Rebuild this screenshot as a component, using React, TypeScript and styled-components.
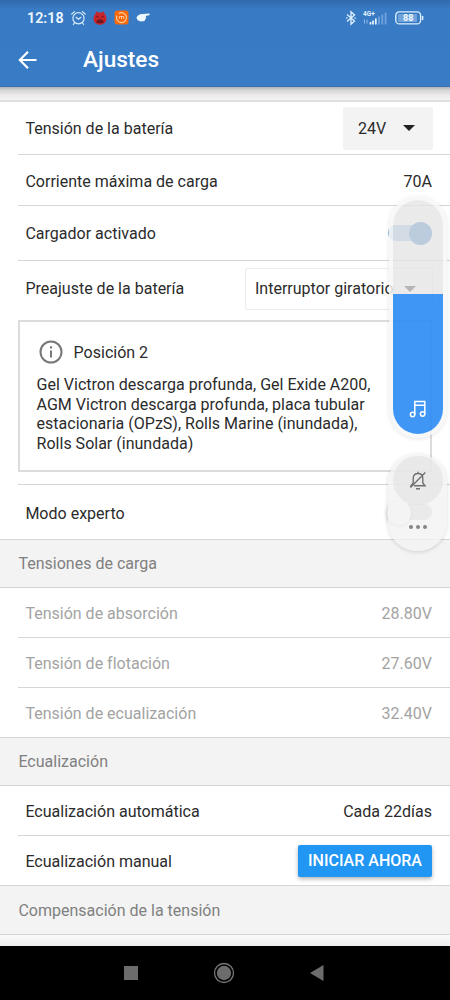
import React from 'react';
import styled, { createGlobalStyle } from 'styled-components';

const GlobalStyle = createGlobalStyle`
  * { box-sizing: border-box; }
  body { margin: 0; background: #fff; }
`;

const Screen = styled.div`
  position: relative;
  width: 450px;
  height: 1000px;
  overflow: hidden;
  display: flex;
  flex-direction: column;
  background: #fff;
  color: #2b2b2b;
  font-family: Roboto, sans-serif;
  font-size: 16.03px;
  font-variant-ligatures: none;
`;

const Header = styled.header`
  flex: none;
  height: 87px;
  background: linear-gradient(#3169ac 0, #387ac4 9px, #397cc6 100%);
  border-bottom: 1px solid #3a70ae;
  color: #fff;
`;

const StatusBar = styled.div`
  height: 35px;
  display: flex;
  align-items: center;
  justify-content: space-between;
  padding: 0 26px 0 27px;
`;

const StatusGroup = styled.div<{ $gap: number }>`
  display: flex;
  align-items: center;
  gap: ${(p) => p.$gap}px;
  svg { display: block; }
`;

const Clock = styled.span`
  width: 37px;
  padding-top: 1px;
  font-size: 14.3px;
  font-weight: 600;
  color: #eef7ff;
  white-space: nowrap;
`;

const TitleBar = styled.div`
  height: 49px;
  display: flex;
  align-items: center;
  gap: 45px;
  padding-left: 18px;
  svg { display: block; }
`;

const Title = styled.h1`
  margin: 0;
  font-size: 22.6px;
  font-weight: 500;
`;

const HeaderShadow = styled.div`
  flex: none;
  height: 15px;
  border-bottom: 2px solid #dfdfdf;
  background: linear-gradient(#aeb2b9 0, #d3d3d4 3px, #eceaea 8px, #f4f3f2 100%);
`;

const Row = styled.div<{ $h: number; $full?: boolean; $muted?: boolean }>`
  flex: none;
  height: ${(p) => p.$h}px;
  margin-left: ${(p) => (p.$full ? 0 : 18)}px;
  padding: 0 18px 0 ${(p) => (p.$full ? 25.4 : 7.4)}px;
  border-bottom: 1px solid #d6d6d6;
  display: flex;
  align-items: center;
  justify-content: space-between;
  white-space: nowrap;
  color: ${(p) => (p.$muted ? '#a3a3a3' : '#2b2b2b')};
`;

const Label = styled.span<{ $drop?: number }>`
  padding-top: ${(p) => p.$drop ?? 2}px;
`;

const SectionTitle = styled.h2<{ $h: number }>`
  flex: none;
  margin: 0;
  height: ${(p) => p.$h}px;
  padding-left: 18.4px;
  display: flex;
  align-items: center;
  background: #f3f3f3;
  border-bottom: 1px solid #d3d3d3;
  color: #808080;
  font-size: 16.03px;
  font-weight: 400;
`;

const VoltageSelect = styled.div`
  width: 90px;
  height: 43px;
  margin-right: -1px;
  padding: 0 18px 0 15px;
  display: flex;
  align-items: center;
  justify-content: space-between;
  background: #f3f3f3;
  border-radius: 2px;
`;

const PresetSelect = styled.div`
  width: 188px;
  height: 42px;
  padding: 0 16px 0 9.5px;
  display: flex;
  align-items: center;
  justify-content: space-between;
  border: 1px solid #ececec;
  border-radius: 2px;
`;

const Caret = styled.span`
  flex: none;
  border: 6px solid transparent;
  border-top-color: #222;
  border-bottom: 0;
`;

const PresetBlock = styled.section`
  flex: none;
  height: 224px;
  margin-left: 18px;
  border-bottom: 1px solid #d6d6d6;
`;

const PresetRow = styled.div`
  height: 55px;
  display: flex;
  align-items: center;
  justify-content: space-between;
  padding: 0 17.5px 0 7.4px;
  white-space: nowrap;
`;

const InfoCard = styled.div`
  height: 152px;
  margin: 4px 18px 0 0;
  padding: 17px 16.600px;
  border: 2px solid #dcdcdc;
`;

const InfoHead = styled.div`
  display: flex;
  align-items: center;
  gap: 11px;
  height: 26px;
  padding-left: 2px;
  svg { display: block; }
`;

const InfoText = styled.p`
  margin: 10px 0 0;
  line-height: 19.5px;
  white-space: nowrap;
`;

const Switch = styled.span<{ $on?: boolean }>`
  position: relative;
  width: 43px;
  height: 24px;
  flex: none;
  &::before {
    content: '';
    position: absolute;
    left: ${(p) => (p.$on ? -1 : 1)}px;
    right: 0;
    top: 4px;
    height: 16px;
    border-radius: 8px;
    background: ${(p) => (p.$on ? '#9cbfe3' : '#c6c6c6')};
  }
  &::after {
    content: '';
    position: absolute;
    top: ${(p) => (p.$on ? 0.5 : 1)}px;
    left: ${(p) => (p.$on ? 19.5 : -2)}px;
    width: ${(p) => (p.$on ? 23 : 24)}px;
    height: ${(p) => (p.$on ? 23 : 24)}px;
    border-radius: 50%;
    background: ${(p) => (p.$on ? '#3a7fc8' : '#fafafa')};
    box-shadow: ${(p) => (p.$on ? 'none' : '0 1px 4px rgba(0,0,0,.25)')};
  }
`;

const StartButton = styled.button`
  width: 134px;
  height: 32px;
  padding: 0;
  border: 0;
  border-radius: 2px;
  background: #2196f3;
  box-shadow: 0 2px 4px rgba(0, 0, 0, 0.3);
  color: #fff;
  font: 500 16.03px Roboto, sans-serif;
`;

const PageEnd = styled.div`
  flex: 1;
  background: linear-gradient(#fbfbfb, #ececec);
`;

const NavBar = styled.nav`
  flex: none;
  height: 54px;
  background: #000;
  display: flex;
  justify-content: center;
  align-items: center;
  gap: 75px;
  padding-right: 2px;
  svg { display: block; }
`;

const VolumePanel = styled.div`
  position: absolute;
  left: 389px;
  top: 196px;
  width: 58px;
  height: 242px;
  border: 4px solid rgba(247, 247, 247, 0.86);
  border-radius: 29px;
  box-shadow: 0 1px 4px rgba(0, 0, 0, 0.1);
`;

const VolumeTrack = styled.div`
  width: 50px;
  height: 234px;
  border-radius: 25px;
  overflow: hidden;
  display: flex;
  flex-direction: column;
  justify-content: flex-end;
  background: linear-gradient(rgba(228, 228, 228, 0.76) 94px, transparent 94px);
`;

const VolumeLevel = styled.div`
  height: 140px;
  display: flex;
  align-items: flex-end;
  justify-content: center;
  padding-bottom: 16px;
  background: rgba(43, 139, 244, 0.9);
  svg { display: block; }
`;

const MutePanel = styled.div`
  position: absolute;
  left: 388px;
  top: 454px;
  width: 59px;
  height: 97px;
  padding: 2px 0 0 5px;
  border-radius: 29px;
  background: rgba(243, 243, 243, 0.8);
  box-shadow: 0 1px 4px rgba(0, 0, 0, 0.15);
`;

const MuteButton = styled.div`
  width: 50px;
  height: 49px;
  border-radius: 25px;
  background: rgba(222, 222, 222, 0.5);
  display: flex;
  align-items: center;
  justify-content: center;
`;

const More = styled.div`
  display: flex;
  justify-content: center;
  gap: 3px;
  width: 50px;
  margin-top: 19.500px;
`;

const Dot = styled.span`
  width: 4px;
  height: 4px;
  border-radius: 50%;
  background: #858585;
`;

const AlarmIcon = () => (
  <svg width="15" height="16" viewBox="0 0 15 16" fill="none" stroke="#d8ecfc" strokeWidth="1.2" strokeLinecap="round">
    <circle cx="7.5" cy="8.3" r="5.6" />
    <path d="M.8 4 3.6 1.6M14.2 4 11.4 1.6M5 7.3l2.5 2 2.5-2M3.5 13l-1.2 1.5M11.5 13l1.2 1.5" />
  </svg>
);

const BugIcon = () => (
  <svg width="14" height="16" viewBox="0 0 14 16">
    <path d="M3 1.2 5 2.600h4l2-1.400.4 2.800c1.500 1 2.100 2.600 2.100 4.800 0 3.500-2.600 6-6.500 6S.5 12.300.5 8.800C.5 6.500 1.200 5 2.600 4Z" fill="#c9252b" />
    <path d="M3.300 6 5.500 7.500M10.700 6 8.500 7.500" fill="none" stroke="#7d1a25" strokeWidth="1.500" />
    <path d="M3.200 12.500C3.500 10.500 5 9.300 7 9.300s3.500 1.200 3.800 3.200C9.500 13.400 4.500 13.400 3.200 12.500Z" fill="#6b1822" />
  </svg>
);

const CashIcon = () => (
  <svg width="15" height="15" viewBox="0 0 15 15">
    <rect x=".5" y=".5" width="14" height="14" rx="3" fill="#f8690c" />
    <path d="M4.800 3.400A5 5 0 1 1 2.800 5.800" fill="none" stroke="#ffd0a6" strokeWidth="1.100" />
    <path d="M5.300 9V6.500h4.400V9M7.500 6.500V9" fill="none" stroke="#ffc697" strokeWidth="1" />
  </svg>
);

const HandIcon = () => (
  <svg width="15" height="12" viewBox="0 0 15 12" fill="#eef8ff">
    <path d="M.5 5.500C1.500 3 4 1.800 6.500 2L13 1.500c1 0 1 1.700 0 1.800L9.500 4c1 .8.800 1.600.2 2 .3.900-.1 1.500-.7 1.800 0 1-1 1.500-2 1.500C4 9.700.8 8.800.5 5.500Z" />
  </svg>
);

const BluetoothIcon = () => (
  <svg width="10" height="16" viewBox="0 0 10 16" fill="none" stroke="#e0f1ff" strokeWidth="1.300">
    <path d="M1 4.500 8.500 11 5 14.300V1.700L8.500 5 1 11.500" />
    <path d="M.3 8h1.200M8.500 8h1.200" />
  </svg>
);

const SignalText = styled.text`
  font: 700 6.5px Roboto, sans-serif;
`;

const SignalIcon = () => (
  <svg width="25" height="15" viewBox="0 0 25 15">
    <SignalText x="0" y="5.800" fill="#e0f1ff">4G+</SignalText>
    <path d="M1.500 9.500v4M4 9.500v4" stroke="#8dbae6" strokeWidth="1" />
    <path d="M7.500 12v2.500M10 10.500v4M12.800 8.500v6" stroke="#e8f6ff" strokeWidth="1.700" />
    <path d="M16 6.500v8M19.300 4.500v10M22.600 2.500v12" stroke="#6fa4dc" strokeWidth="1.800" />
  </svg>
);

const BatteryText = styled.text`
  font: 700 9px Roboto, sans-serif;
`;

const BatteryIcon = () => (
  <svg width="29" height="14" viewBox="0 0 29 14">
    <rect x=".8" y=".9" width="24.800" height="12" rx="3.500" fill="none" stroke="#d9efff" strokeWidth="1.400" />
    <rect x="3" y="3" width="19" height="8" rx="1" fill="#6fa3da" />
    <path d="M27.600 5v4" stroke="#d9efff" strokeWidth="1.500" />
    <BatteryText x="13.200" y="10.200" textAnchor="middle" fill="#f2faff">88</BatteryText>
  </svg>
);

const BackIcon = () => (
  <svg width="20" height="20" viewBox="0 0 20 20" fill="none" stroke="#fff" strokeWidth="2.100">
    <path d="M18.500 10H2.500M10 1.800 1.800 10l8.200 8.200" />
  </svg>
);

const InfoIcon = () => (
  <svg width="24" height="24" viewBox="0 0 24 24" fill="none" stroke="#777" strokeWidth="2">
    <circle cx="12" cy="12" r="10.500" />
    <path d="M12 10.500v7M12 6.200v2.300" />
  </svg>
);

const MusicIcon = () => (
  <svg width="18" height="18" viewBox="0 0 18 18" fill="none" stroke="#fff" strokeWidth="1.500">
    <path d="M5.800 14.500V1.500h10v12.500M5.800 5.300h10" />
    <circle cx="3.600" cy="14.500" r="2.200" />
    <circle cx="13.600" cy="14" r="2.200" />
  </svg>
);

const BellOffIcon = () => (
  <svg width="18" height="20" viewBox="0 0 18 20" fill="none" stroke="#707070" strokeWidth="1.400">
    <path d="M4.200 12V7.500C4.200 4.500 6 2.500 9 2.500s4.800 2 4.800 5V12l2.200 2.700H5M4.200 12 2 14.700h1M9 2.500V.8M7 17.800h4M16.300 1.500 1.500 16.500" />
  </svg>
);

const App = () => (
  <>
    <GlobalStyle />
    <Screen>
      <Header>
        <StatusBar>
          <StatusGroup $gap={7}>
            <Clock>12:18</Clock>
            <AlarmIcon />
            <BugIcon />
            <CashIcon />
            <HandIcon />
          </StatusGroup>
          <StatusGroup $gap={7}>
            <BluetoothIcon />
            <SignalIcon />
            <BatteryIcon />
          </StatusGroup>
        </StatusBar>
        <TitleBar>
          <BackIcon />
          <Title>Ajustes</Title>
        </TitleBar>
      </Header>
      <HeaderShadow />
      <Row $h={53}>
        <Label $drop={0}>Tensión de la batería</Label>
        <VoltageSelect>
          24V
          <Caret />
        </VoltageSelect>
      </Row>
      <Row $h={51}>
        <Label>Corriente máxima de carga</Label>
        <Label>70A</Label>
      </Row>
      <Row $h={55}>
        <Label $drop={0}>Cargador activado</Label>
        <Switch $on />
      </Row>
      <PresetBlock>
        <PresetRow>
          <Label $drop={0}>Preajuste de la batería</Label>
          <PresetSelect>
            <span>Interruptor giratorio</span>
            <Caret />
          </PresetSelect>
        </PresetRow>
        <InfoCard>
          <InfoHead>
            <InfoIcon />
            <Label $drop={0}>Posición 2</Label>
          </InfoHead>
          <InfoText>
            Gel Victron descarga profunda, Gel Exide A200,
            <br />
            AGM Victron descarga profunda, placa tubular
            <br />
            estacionaria (OPzS), Rolls Marine (inundada),
            <br />
            Rolls Solar (inundada)
          </InfoText>
        </InfoCard>
      </PresetBlock>
      <Row $h={55} $full>
        <Label>Modo experto</Label>
        <Switch />
      </Row>
      <SectionTitle $h={48}>Tensiones de carga</SectionTitle>
      <Row $h={50} $muted>
        <Label>Tensión de absorción</Label>
        <Label>28.80V</Label>
      </Row>
      <Row $h={50} $muted>
        <Label>Tensión de flotación</Label>
        <Label>27.60V</Label>
      </Row>
      <Row $h={50} $full $muted>
        <Label>Tensión de ecualización</Label>
        <Label>32.40V</Label>
      </Row>
      <SectionTitle $h={48}>Ecualización</SectionTitle>
      <Row $h={50}>
        <Label>Ecualización automática</Label>
        <Label>Cada 22días</Label>
      </Row>
      <Row $h={50} $full>
        <Label>Ecualización manual</Label>
        <StartButton>INICIAR AHORA</StartButton>
      </Row>
      <SectionTitle $h={49}>Compensación de la tensión</SectionTitle>
      <PageEnd />
      <NavBar>
        <svg width="14" height="14">
          <rect width="14" height="14" fill="#6c6c6c" />
        </svg>
        <svg width="22" height="22" viewBox="0 0 22 22">
          <circle cx="11" cy="11" r="9.500" fill="none" stroke="#777" strokeWidth="1.300" />
          <circle cx="11" cy="11" r="7.200" fill="#6c6c6c" />
        </svg>
        <svg width="14" height="16">
          <path d="M0 8 13.500 0v16Z" fill="#6c6c6c" />
        </svg>
      </NavBar>
      <VolumePanel>
        <VolumeTrack>
          <VolumeLevel>
            <MusicIcon />
          </VolumeLevel>
        </VolumeTrack>
      </VolumePanel>
      <MutePanel>
        <MuteButton>
          <BellOffIcon />
        </MuteButton>
        <More>
          <Dot />
          <Dot />
          <Dot />
        </More>
      </MutePanel>
    </Screen>
  </>
);

export default App;
